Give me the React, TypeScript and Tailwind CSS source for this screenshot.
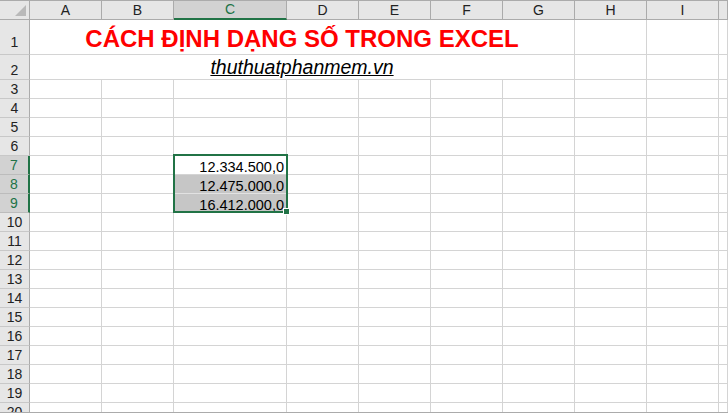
import React from "react";

const FONT = { fontFamily: '"Liberation Sans", Arial, sans-serif' };

const COLS = [
  { key: "A", w: "w-[72px]" },
  { key: "B", w: "w-[72px]" },
  { key: "C", w: "w-[113px]" },
  { key: "D", w: "w-[72px]" },
  { key: "E", w: "w-[72px]" },
  { key: "F", w: "w-[72px]" },
  { key: "G", w: "w-[72px]" },
  { key: "H", w: "w-[72px]" },
  { key: "I", w: "w-[72px]" },
  { key: "", w: "w-[9px]" },
];

const VALUES: Record<number, string> = {
  7: "12.334.500,0",
  8: "12.475.000,0",
  9: "16.412.000,0",
};

function RowHeader({ n, h }: { n: number; h: string }) {
  const sel = n >= 7 && n <= 9;
  return (
    <div
      className={`${h} w-[30px] shrink-0 flex items-end justify-center text-[14px] leading-none border-b ${
        sel
          ? "bg-[#d2d2d2] text-[#217346] border-r-2 border-r-[#217346] border-b-[#bcbcbc]"
          : "bg-[#e6e6e6] text-[#222] border-r border-r-[#ababab] border-b-[#c8c8c8]"
      } ${n === 1 ? "pb-[5px]" : "pb-[2px]"}`}
    >
      {n}
    </div>
  );
}

function Row({ n }: { n: number }) {
  return (
    <div className="flex">
      <RowHeader n={n} h="h-[19px]" />
      {COLS.map((c) => {
        const isC = c.key === "C";
        const gray = isC && (n === 8 || n === 9);
        return (
          <div
            key={c.key || "J"}
            className={`${c.w} h-[19px] shrink-0 border-r border-b ${
              gray ? "bg-[#c6c6c6] border-b-[#e2e2e2]" : "bg-white border-b-[#d4d4d4]"
            } border-r-[#d4d4d4] flex items-end justify-end pr-[2px] text-[14.5px] leading-none text-black`}
          >
            {isC && VALUES[n] ? VALUES[n] : null}
          </div>
        );
      })}
    </div>
  );
}

export default function App() {
  const rows = Array.from({ length: 18 }, (_, i) => i + 3);
  return (
    <div className="w-[728px] h-[414px] overflow-hidden bg-white" style={FONT}>
      <div className="h-[413px] overflow-hidden border-b border-[#ababab]">
        {/* column headers */}
        <div className="flex h-[20px] border-t border-[#ababab]">
          <div className="w-[30px] shrink-0 bg-[#e6e6e6] border-r border-b border-[#ababab] relative">
            <svg className="absolute left-[15px] top-[4px]" width="12" height="12" viewBox="0 0 12 12">
              <polygon points="11,0 11,11 0,11" fill="#b9b9b9" />
            </svg>
          </div>
          {COLS.map((c) => {
            const sel = c.key === "C";
            return (
              <div
                key={c.key || "J"}
                className={`${c.w} shrink-0 flex items-end justify-center text-[14px] leading-none pb-[2px] border-r border-[#ababab] ${
                  sel
                    ? "bg-[#d2d2d2] text-[#217346] border-b-2 border-b-[#217346]"
                    : "bg-[#e6e6e6] text-[#222] border-b"
                }`}
              >
                {c.key}
              </div>
            );
          })}
        </div>

        <div className="relative">
          {/* row 1: merged title */}
          <div className="flex">
            <RowHeader n={1} h="h-[35px]" />
            <div className="w-[545px] h-[35px] shrink-0 border-r border-b border-[#d4d4d4] flex justify-center pt-[7px]">
              <span className="text-[24px] leading-none font-bold text-[#ff0000]">
                CÁCH ĐỊNH DẠNG SỐ TRONG EXCEL
              </span>
            </div>
            <div className="w-[72px] h-[35px] shrink-0 border-r border-b border-[#d4d4d4]" />
            <div className="w-[72px] h-[35px] shrink-0 border-r border-b border-[#d4d4d4]" />
            <div className="w-[9px] h-[35px] shrink-0 border-r border-b border-[#d4d4d4]" />
          </div>

          {/* row 2: merged subtitle */}
          <div className="flex">
            <RowHeader n={2} h="h-[25px]" />
            <div className="w-[545px] h-[25px] shrink-0 border-r border-b border-[#d4d4d4] flex justify-center pt-[3px]">
              <span className="text-[19.5px] leading-none italic underline text-black">
                thuthuatphanmem.vn
              </span>
            </div>
            <div className="w-[72px] h-[25px] shrink-0 border-r border-b border-[#d4d4d4]" />
            <div className="w-[72px] h-[25px] shrink-0 border-r border-b border-[#d4d4d4]" />
            <div className="w-[9px] h-[25px] shrink-0 border-r border-b border-[#d4d4d4]" />
          </div>

          {rows.map((n) => (
            <Row key={n} n={n} />
          ))}

          {/* selection C7:C9 */}
          <div className="absolute left-[173px] top-[134px] w-[115px] h-[59px] border-2 border-[#217346] pointer-events-none" />
          <div className="absolute left-[283px] top-[188px] w-[7px] h-[7px] bg-[#217346] border border-white" />
        </div>
      </div>
    </div>
  );
}
